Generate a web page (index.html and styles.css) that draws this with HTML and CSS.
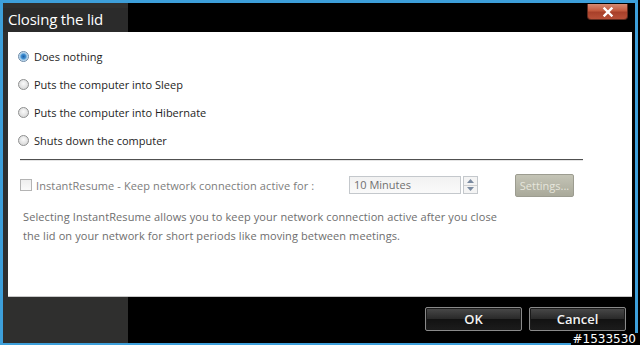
FILE: index.html
```html
<!DOCTYPE html>
<html>
<head>
<meta charset="utf-8">
<link rel="stylesheet" href="styles.css">
</head>
<body>
<div class="window">
  <div class="titlebar">
    <div class="title">Closing the lid</div>
    <div class="close">
      <svg width="12" height="10" viewBox="0 0 12 10"><path d="M2.5 1.5 L9.5 8.5 M9.5 1.5 L2.5 8.5" stroke="#fff" stroke-width="2.4" stroke-linecap="square"/></svg>
    </div>
  </div>
  <div class="panel">
    <div class="options">
      <label class="opt"><span class="radio checked"></span>Does nothing</label>
      <label class="opt"><span class="radio"></span>Puts the computer into Sleep</label>
      <label class="opt"><span class="radio"></span>Puts the computer into Hibernate</label>
      <label class="opt"><span class="radio"></span>Shuts down the computer</label>
    </div>
    <div class="sep"></div>
    <div class="resume">
      <label class="chk"><span class="box"></span>InstantResume - Keep network connection active for :</label>
      <div class="spin">
        <div class="field">10 Minutes</div>
        <div class="arrows">
          <span class="ar"><svg width="7" height="4" viewBox="0 0 7 4"><path d="M0 4 L3.5 0 L7 4Z" fill="#7a8aa0"/></svg></span>
          <span class="ar"><svg width="7" height="4" viewBox="0 0 7 4"><path d="M0 0 L3.5 4 L7 0Z" fill="#7a8aa0"/></svg></span>
        </div>
      </div>
      <div class="settings">Settings...</div>
    </div>
    <p class="desc">Selecting InstantResume allows you to keep your network connection active after you close<br>the lid on your network for short periods like moving between meetings.</p>
  </div>
  <div class="footer">
    <div class="btn">OK</div>
    <div class="btn">Cancel</div>
  </div>
  <div class="stamp">#1533530</div>
</div>
</body>
</html>
```
FILE: styles.css
```css
html, body { margin: 0; padding: 0; background: #000; }
body { width: 640px; height: 345px; overflow: hidden; font-family: "Open Sans", "Noto Sans", sans-serif; }
.window {
  position: relative;
  width: 638px; height: 345px; box-sizing: border-box;
  border-left: 3px solid #3d9fda; border-top: 3px solid #3d9fda;
  border-right: 3px solid #3d9fda; border-bottom: 2px solid #3d9fda;
  background: linear-gradient(to right, #2f2f2e 125px, #000 125px);
  display: flex; flex-direction: column;
}
.titlebar { height: 29px; display: flex; align-items: flex-start; justify-content: space-between; }
.title {
  width: 125px; height: 24px; margin-top: 5px; box-sizing: border-box; padding-left: 5px;
  background: #2b2b2b; color: #fff; font-size: 15px; line-height: 22px; letter-spacing: -0.2px;
}
.close {
  width: 41px; height: 16px; margin-top: 1px; margin-right: 7px; box-sizing: border-box;
  border: 1px solid #5e2a1e; border-top: none; border-radius: 0 0 4px 4px;
  background: linear-gradient(#d48a72 0%, #c25a3e 45%, #a8402a 55%, #b85038 100%);
  display: flex; align-items: center; justify-content: center;
}
.panel {
  margin-left: 5px; width: 624px; height: 265px; box-sizing: border-box;
  background: #fff; border-bottom: 1px solid #c8c8c8;
  padding: 16px 0 0 10px; color: #1e1e1e; font-size: 11px;
}
.options { display: flex; flex-direction: column; gap: 11px; }
.opt { display: flex; align-items: center; height: 17px; gap: 5px; }
.radio {
  width: 11px; height: 11px; border-radius: 50%; box-sizing: border-box;
  border: 1px solid #8e8f8f;
  background: radial-gradient(circle at 50% 40%, #fafafa 0%, #dcdcdc 70%, #c8c8c8 100%);
}
.radio.checked {
  background: radial-gradient(circle, #1d5fa8 0%, #3f8ed0 35%, #9fc8e8 55%, #e8f2fa 80%);
  border-color: #6c8aa8;
}
.sep { margin: 10px 0 0 2px; width: 563px; height: 1px; background: #505050; box-shadow: 0 1px 0 #e4e4e4; }
.resume { display: flex; align-items: center; margin-top: 13px; margin-left: 2px; height: 24px; }
.chk { display: flex; align-items: center; gap: 4px; color: #7c7c7c; width: 329px; letter-spacing: 0.1px; }
.box { width: 12px; height: 12px; box-sizing: border-box; border: 1px solid #b4b4b4; background: linear-gradient(#eeeeee, #fafafa); }
.spin { display: flex; align-items: center; gap: 2px; }
.field {
  width: 112px; height: 18px; box-sizing: border-box; border: 1px solid #c4c8cc;
  background: linear-gradient(#f2f2f2, #fafafa); color: #707070; font-size: 11px; line-height: 16px; padding-left: 4px;
}
.arrows { width: 15px; height: 18px; box-sizing: border-box; border: 1px solid #c4c8cc; display: flex; flex-direction: column; background: #f4f4f4; }
.ar { flex: 1; display: flex; align-items: center; justify-content: center; }
.ar + .ar { border-top: 1px solid #d0d0d0; }
.settings {
  margin-left: 37px; width: 59px; height: 23px; box-sizing: border-box;
  border: 1px solid #9c9c90; border-radius: 2px;
  background: linear-gradient(#c4c4b6, #a9a99a); color: #e6e6dc; font-size: 11px; line-height: 21px; text-align: center;
}
.desc { margin: 10px 0 0 5px; color: #6e6e6e; font-size: 11px; line-height: 19px; letter-spacing: 0.1px; }
.footer { flex: 1; display: flex; justify-content: flex-end; align-items: flex-start; gap: 7px; padding: 10px 9px 0 0; }
.btn {
  width: 97px; height: 24px; box-sizing: border-box;
  border: 1px solid #8a8a8a; border-radius: 2px;
  background: linear-gradient(#4a4a4a 0%, #2a2a2a 48%, #121212 52%, #1c1c1c 100%);
  box-shadow: inset 0 0 0 1px #1a1a1a;
  color: #f2f2f2; font-size: 13px; font-weight: 600; line-height: 22px; text-align: center;
}
.stamp {
  position: absolute; right: -3px; bottom: -3px; color: #fff; background: #000;
  font-family: "DejaVu Sans", sans-serif; font-size: 12px; line-height: 13px; padding: 0 2px 0 2px;
}
```
